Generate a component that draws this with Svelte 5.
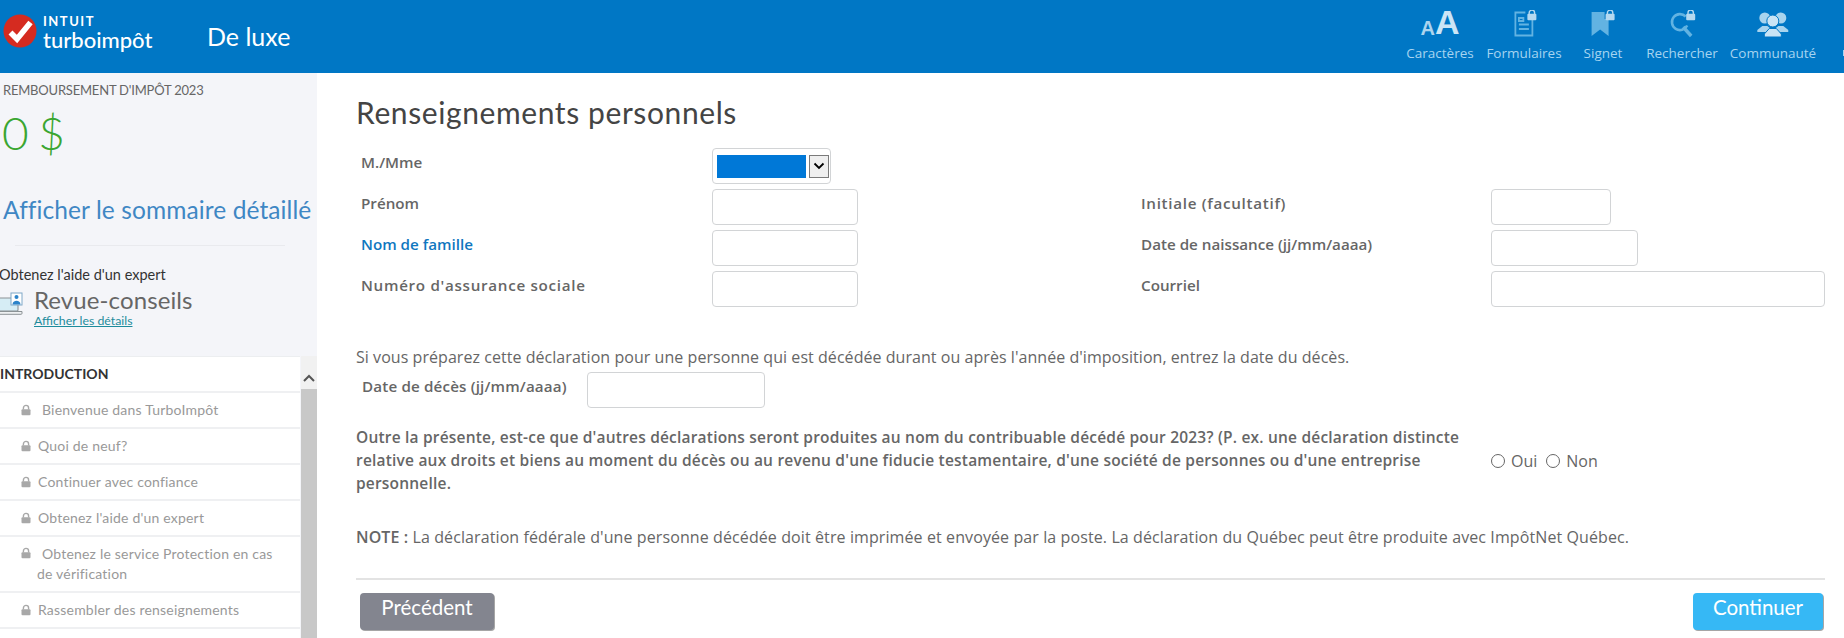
<script>
  const tools = ['Caractères', 'Formulaires', 'Signet', 'Rechercher', 'Communauté'];
  const items = [
    { text: 'Bienvenue dans TurboImpôt', cls: 'first' },
    { text: 'Quoi de neuf?' },
    { text: 'Continuer avec confiance' },
    { text: "Obtenez l'aide d'un expert" },
    { text: 'Obtenez le service Protection en cas de vérification', cls: 'double' },
    { text: 'Rassembler des renseignements' }
  ];
</script>

{#snippet lock(color, size)}
  <svg class="lock" width={size} height={size} viewBox="0 0 12 12" aria-hidden="true">
    <path d="M3.4 5.5V4a2.6 2.6 0 0 1 5.2 0v1.5" fill="none" stroke={color} stroke-width="1.4" />
    <rect x="1.5" y="5.2" width="9" height="6" rx="1" fill={color} />
  </svg>
{/snippet}

<div class="page">
  <header class="topbar">
    <div class="brand">
      <svg class="logo" width="34" height="34" viewBox="0 0 34 34" aria-hidden="true">
        <circle cx="17" cy="17" r="16.5" fill="#d52b20" />
        <path d="M7.500 18.500l6.500 6.500L27.500 8.500" fill="none" stroke="#fff" stroke-width="5.600" />
      </svg>
      <div class="wordmark">
        <span class="intuit">INTUIT</span>
        <span class="turbo">turboimpôt</span>
      </div>
      <span class="edition">De luxe</span>
    </div>
    <nav class="tools">
      <div class="tool t0">
        <div class="ico aa"><span class="small-a">A</span><span class="big-a">A</span></div>
        <span>{tools[0]}</span>
      </div>
      <div class="tool t1">
        <div class="ico">
          <svg width="30" height="28" viewBox="0 0 30 28" aria-hidden="true">
            <path d="M16 2.500H6v23h17V10" fill="none" stroke="#62b3e2" stroke-width="1.800" />
            <path d="M9.500 8h4.500v3H9.500zM9.500 14.500h10M9.500 19h10" fill="none" stroke="#62b3e2" stroke-width="1.800" />
            <path d="M19.800 4V2.800a2.700 2.700 0 0 1 5.400 0V4" fill="none" stroke="#b5d9f0" stroke-width="1.400" />
            <rect x="18" y="3.800" width="9" height="6.400" rx="1" fill="#b5d9f0" />
          </svg>
        </div>
        <span>{tools[1]}</span>
      </div>
      <div class="tool t2">
        <div class="ico">
          <svg width="30" height="28" viewBox="0 0 30 28" aria-hidden="true">
            <path d="M4 2h13v7h4v17l-8.500-6.500L4 26z" fill="#62b3e2" />
            <path d="M19.800 4V2.800a2.700 2.700 0 0 1 5.400 0V4" fill="none" stroke="#b5d9f0" stroke-width="1.400" />
            <rect x="18" y="3.800" width="9" height="6.400" rx="1" fill="#b5d9f0" />
          </svg>
        </div>
        <span>{tools[2]}</span>
      </div>
      <div class="tool t3">
        <div class="ico">
          <svg width="30" height="28" viewBox="0 0 30 28" aria-hidden="true">
            <path d="M18.500 6.500a8 8 0 1 0 1.500 9" fill="none" stroke="#62b3e2" stroke-width="2.600" />
            <path d="M16 17l8 9" fill="none" stroke="#62b3e2" stroke-width="3.400" />
            <path d="M20.800 4V2.800a2.700 2.700 0 0 1 5.400 0V4" fill="none" stroke="#b5d9f0" stroke-width="1.400" />
            <rect x="19" y="3.800" width="9" height="6.400" rx="1" fill="#b5d9f0" />
          </svg>
        </div>
        <span>{tools[3]}</span>
      </div>
      <div class="tool t4">
        <div class="ico">
          <svg width="32" height="28" viewBox="0 0 32 28" aria-hidden="true">
            <g fill="#a8d4ee">
              <circle cx="8" cy="8" r="5.500" />
              <path d="M0.500 20l5-4h5L13 18v4H0.500z" />
              <circle cx="24" cy="8" r="5.500" />
              <path d="M31.500 20l-5-4h-5L19 18v4h12.500z" />
            </g>
            <g fill="#c9e4f5" stroke="#0077c5" stroke-width="1">
              <circle cx="16" cy="11" r="6" />
              <path d="M7.500 24l5-5.500h7l5 5.500v3h-17z" />
            </g>
          </svg>
        </div>
        <span>{tools[4]}</span>
      </div>
      <span class="clip"></span>
    </nav>
  </header>

  <div class="body">
    <aside class="side">
      <div class="refund-label">REMBOURSEMENT D'IMPÔT 2023</div>
      <div class="refund">0 $</div>
      <div class="summary">Afficher le sommaire détaillé</div>
      <div class="rule"></div>
      <div class="expert">Obtenez l'aide d'un expert</div>
      <div class="review">
        <svg width="24" height="24" viewBox="0 0 24 24" aria-hidden="true">
          <rect x="-1" y="6" width="19" height="13" rx="1" fill="#d6edf5" stroke="#8b9295" stroke-width="1.100" />
          <path d="M-2 19.500h24v1.800a1 1 0 0 1-1 1H-2z" fill="#eef0f2" stroke="#8b9295" stroke-width="1" />
          <rect x="11" y="1" width="11" height="12" fill="#fff" stroke="#7fa8c8" stroke-width="1" />
          <circle cx="16.500" cy="5" r="2" fill="#2c83c9" />
          <path d="M12.500 12.500c0-5 8-5 8 0z" fill="#2c83c9" />
        </svg>
        <div>
          <div class="review-title">Revue-conseils</div>
          <div class="review-link">Afficher les détails</div>
        </div>
      </div>
      <div class="menu">
        <div class="list">
          <div class="list-head">INTRODUCTION</div>
          {#each items as item}
            <div class="row {item.cls ?? ''}">
              {@render lock('#a8a8a8', 12)}<span class="row-text">{item.text}</span>
            </div>
          {/each}
        </div>
        <div class="scrollbar">
          <svg width="16" height="14" viewBox="0 0 16 14" aria-hidden="true">
            <path d="M3 10l5-5 5 5" fill="none" stroke="#555" stroke-width="2" />
          </svg>
          <div class="thumb"></div>
        </div>
      </div>
    </aside>

    <main class="main">
      <h1>Renseignements personnels</h1>
      <div class="form-grid">
        <label class="lbl" for="title">M./Mme</label>
        <div class="fake-select" id="title">
          <span class="selected"></span>
          <span class="arrow">
            <svg width="12" height="8" viewBox="0 0 12 8" aria-hidden="true"><path d="M1.500 1.500L6 6l4.500-4.500" fill="none" stroke="#000" stroke-width="1.800" /></svg>
          </span>
        </div>
        <span></span><span></span>

        <label class="lbl" for="a">Prénom</label><input id="a" class="w146" />
        <label class="lbl r loose" for="b">Initiale (facultatif)</label><input id="b" class="w120" />

        <label class="lbl blue" for="c">Nom de famille</label><input id="c" class="w146" />
        <label class="lbl r" for="d">Date de naissance (jj/mm/aaaa)</label><input id="d" class="w147" />

        <label class="lbl loose" for="e">Numéro d'assurance sociale</label><input id="e" class="w146" />
        <label class="lbl r" for="f">Courriel</label><input id="f" class="w334" />
      </div>

      <p class="intro">Si vous préparez cette déclaration pour une personne qui est décédée durant ou après l'année d'imposition, entrez la date du décès.</p>
      <div class="death">
        <label class="lbl" for="g">Date de décès (jj/mm/aaaa)</label>
        <input id="g" class="w178" />
      </div>

      <div class="question">
        <p>Outre la présente, est-ce que d'autres déclarations seront produites au nom du contribuable décédé pour 2023? (P. ex. une déclaration distincte relative aux droits et biens au moment du décès ou au revenu d'une fiducie testamentaire, d'une société de personnes ou d'une entreprise personnelle.</p>
        <div class="radios">
          <span class="dot"></span><span>Oui</span>
          <span class="dot second"></span><span>Non</span>
        </div>
      </div>

      <p class="note"><b>NOTE :</b> La déclaration fédérale d'une personne décédée doit être imprimée et envoyée par la poste. La déclaration du Québec peut être produite avec ImpôtNet Québec.</p>

      <div class="actions">
        <button class="btn prev">Précédent</button>
        <button class="btn next">Continuer</button>
      </div>
    </main>
  </div>
</div>

<style>
  :global(body) { margin: 0; background: #fff; }
  .page { width: 1844px; height: 638px; overflow: hidden; font-family: Lato, "Noto Sans", sans-serif; color: #666; }
  .topbar { height: 73px; background: #0077c5; display: flex; justify-content: space-between; }
  .brand { display: flex; align-items: flex-start; }
  .logo { margin: 14px 0 0 3px; flex: none; }
  .wordmark { display: flex; flex-direction: column; margin: 14px 0 0 6px; color: #fff; width: 164px; }
  .intuit { font: 700 13px/14px Lato, sans-serif; letter-spacing: 1.5px; }
  .turbo { font: 500 22px/22px Lato, sans-serif; margin-top: 1px; }
  .edition { font-size: 25px; line-height: 30px; margin-top: 21px; color: #fff; }
  .tools { display: flex; position: relative; width: 464px; color: #a6d4f0; font: 13.500px "Open Sans", sans-serif; }
  .tool { position: absolute; top: 8px; display: flex; flex-direction: column; align-items: center; transform: translateX(-50%); white-space: nowrap; }
  .t0 { left: 60px; } .t1 { left: 144px; } .t2 { left: 223px; } .t3 { left: 302px; } .t4 { left: 393px; }
  .ico { height: 30px; display: flex; align-items: flex-end; justify-content: center; margin-bottom: 6px; }
  .ico svg { display: block; }
  .aa { color: #cbe5f6; font-family: "Liberation Sans", sans-serif; font-weight: 700; line-height: 1; }
  .small-a { font-size: 20px; opacity: 0.85; }
  .big-a { font-size: 34px; margin-bottom: -1px; }
  .clip { position: absolute; right: 0; top: 50px; width: 1px; height: 6px; background: #a6d4f0; }

  .body { display: flex; height: 565px; }
  .side { width: 317px; flex: none; background: #f4f5f9; display: flex; flex-direction: column; overflow: hidden; }
  .refund-label { font-size: 13px; line-height: 16px; margin: 9px 0 0 3px; letter-spacing: -0.2px; color: #666; }
  .refund { font-size: 46px; font-weight: 300; line-height: 54px; color: #3aa631; margin: 8px 0 0 2px; word-spacing: -3px; }
  .summary { font-size: 24.500px; line-height: 30px; color: #3f87c4; margin: 35px 0 0 3px; white-space: nowrap; letter-spacing: 0.1px; }
  .rule { height: 1px; background: #e9eaee; margin: 20px 32px 0 15px; }
  .expert { font-size: 14.500px; line-height: 18px; color: #333; margin: 20px 0 0 -1px; }
  .review { display: flex; gap: 10px; margin-top: 2px; height: 52px; }
  .review svg { margin-top: 6px; flex: none; }
  .review-title { font-size: 24px; line-height: 28px; color: #666; letter-spacing: 0.1px; }
  .review-link { font-size: 12.300px; line-height: 14px; color: #1d8c9c; text-decoration: underline; }
  .menu { display: flex; flex: 1; margin-top: 18px; min-height: 0; }
  .list { width: 301px; background: #fff; border-top: 1px solid #eceef0; }
  .list-head { height: 34px; line-height: 34px; font-size: 14px; font-weight: 700; color: #333; border-bottom: 2px solid #eff0f2; }
  .row { border-bottom: 2px solid #eff0f2; font-size: 14px; line-height: 20px; color: #999; padding: 7px 12px 7px 20px; box-sizing: border-box; height: 36px; letter-spacing: 0.2px; }
  .row.double { height: 56px; padding-left: 37px; position: relative; }
  .row.double .lock { position: absolute; left: 20px; top: 10px; margin: 0; }
  .row.double .row-text { text-indent: 5px; display: block; }
  .lock { margin-right: 6px; vertical-align: -1px; }
  .row.first .lock { margin-right: 10px; }
  .scrollbar { width: 16px; background: #f1f1f1; display: flex; flex-direction: column; margin-left: 1px; }
  .scrollbar svg { margin-top: 15px; display: block; }
  .thumb { flex: 1; background: #c8c8c8; margin-top: 4px; }

  .main { flex: 1; padding-left: 39px; position: relative; min-width: 0; font-family: "Open Sans", sans-serif; }
  h1 { font: 400 30px/36px Lato, sans-serif; color: #444; margin: 21px 0 0 0; letter-spacing: 0.6px; }
  .form-grid { display: grid; grid-template-columns: 356px 429px 350px 1fr; grid-auto-rows: 41px; margin-top: 18px; }
  .lbl { font-size: 15.200px; font-weight: 600; line-height: 29px; color: #666; padding-left: 5px; white-space: nowrap; }
  .lbl.blue { color: #0f77bf; }
  .lbl.r { padding-left: 0; }
  .lbl.loose { letter-spacing: 0.7px; }
  input { height: 36px; box-sizing: border-box; border: 1px solid #d2d4d6; border-radius: 4px; background: #fff; padding: 0; margin: 0; display: block; outline: none; }
  .w146 { width: 146px; } .w120 { width: 120px; } .w147 { width: 147px; } .w334 { width: 334px; } .w178 { width: 178px; }
  .fake-select { width: 119px; height: 36px; box-sizing: border-box; border: 1px solid #d2d4d6; border-radius: 4px; display: flex; align-items: center; padding-left: 4px; }
  .selected { width: 89px; height: 23px; background: #0078d7; }
  .arrow { width: 18px; height: 21px; margin-left: 3px; background: #efefef; border: 1px solid #7a7a7a; display: flex; align-items: center; justify-content: center; }
  .intro { font-size: 16px; line-height: 20px; margin: 35px 0 0 0; color: #666; white-space: nowrap; letter-spacing: 0.05px; }
  .death { display: flex; margin-top: 5px; height: 36px; }
  .death .lbl { width: 231px; padding-left: 6px; box-sizing: border-box; flex: none; letter-spacing: 0.15px; }
  .question { display: flex; margin-top: 18px; }
  .question p { width: 1135px; padding-right: 20px; box-sizing: border-box; margin: 0; font-size: 15.500px; font-weight: 600; line-height: 23px; color: #666; flex: none; letter-spacing: 0.2px; }
  .radios { display: flex; align-items: center; height: 23px; margin-top: 23px; font-size: 16px; color: #666; }
  .dot { width: 12px; height: 12px; border: 1.300px solid #666; border-radius: 50%; margin-right: 6px; }
  .dot.second { margin-left: 9px; }
  .note { font-size: 16px; line-height: 20px; margin: 32px 0 0 0; color: #666; white-space: nowrap; letter-spacing: 0.1px; }
  .note b { font-weight: 600; }
  .actions { border-top: 2px solid #e3e3e3; margin: 31px 19px 0 0; padding: 13px 2px 0 4px; display: flex; justify-content: space-between; }
  .btn { font: 400 20.500px/24px Lato, sans-serif; color: #fff; border: 0; border-radius: 4px; height: 37px; padding: 0 0 9px; margin: 0; box-shadow: 1px 1px 0 rgba(0, 0, 0, 0.35); }
  .prev { width: 134px; background: #83858f; }
  .next { width: 130px; background: #36b8f5; }
</style>
